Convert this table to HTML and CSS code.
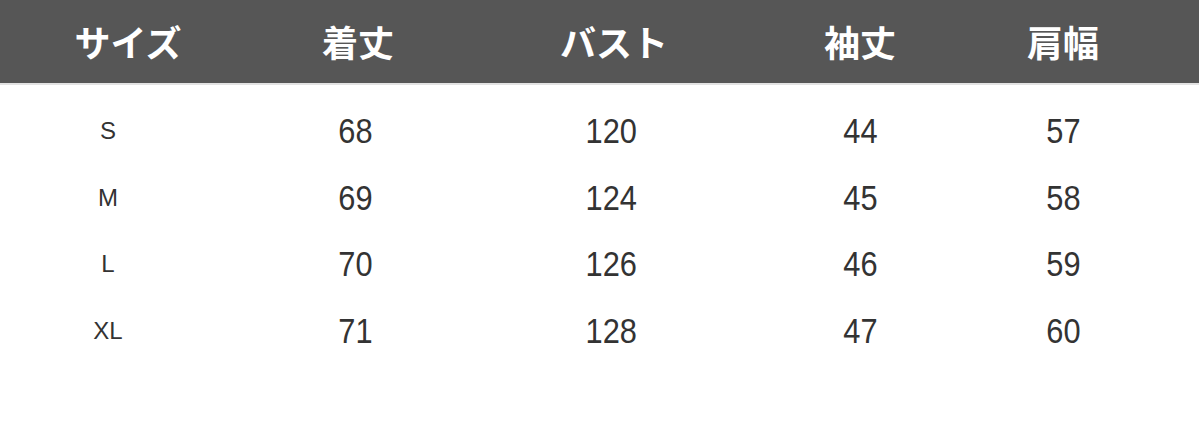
FILE: index.html
```html
<!DOCTYPE html>
<html lang="ja">
<head>
    <meta charset="UTF-8">
    <meta name="viewport" content="width=device-width, initial-scale=1.0">
    <link rel="stylesheet" href="styles.css">
    <title>サイズ表</title>
</head>
<body>
    <div class="size-table">
        <div class="table-head">
            <div class="cell">サイズ</div>
            <div class="cell">着丈</div>
            <div class="cell">バスト</div>
            <div class="cell">袖丈</div>
            <div class="cell">肩幅</div>
        </div>
        <div class="table-body">
            <div class="row">
                <div class="cell size">S</div>
                <div class="cell"><span class="num">68</span></div>
                <div class="cell"><span class="num">120</span></div>
                <div class="cell"><span class="num">44</span></div>
                <div class="cell"><span class="num">57</span></div>
            </div>
            <div class="row">
                <div class="cell size">M</div>
                <div class="cell"><span class="num">69</span></div>
                <div class="cell"><span class="num">124</span></div>
                <div class="cell"><span class="num">45</span></div>
                <div class="cell"><span class="num">58</span></div>
            </div>
            <div class="row">
                <div class="cell size">L</div>
                <div class="cell"><span class="num">70</span></div>
                <div class="cell"><span class="num">126</span></div>
                <div class="cell"><span class="num">46</span></div>
                <div class="cell"><span class="num">59</span></div>
            </div>
            <div class="row">
                <div class="cell size">XL</div>
                <div class="cell"><span class="num">71</span></div>
                <div class="cell"><span class="num">128</span></div>
                <div class="cell"><span class="num">47</span></div>
                <div class="cell"><span class="num">60</span></div>
            </div>
        </div>
    </div>
</body>
</html>
```

FILE: styles.css
```css
body {
    margin: 0;
    padding: 0;
    background-color: #ffffff;
    font-family: "Liberation Sans", "Noto Sans CJK JP", sans-serif;
}

.size-table {
    width: 1199px;
}

/* Shared column widths for head and rows */
.table-head,
.row {
    display: grid;
    grid-template-columns: 256px 204px 308px 184px 222px;
}

.cell {
    text-align: center;
}

/* Dark header bar */
.table-head {
    height: 83px;
    align-items: center;
    background-color: #565656;
    border-bottom: 2px solid #e2e2e2;
    color: #ffffff;
    font-family: "Noto Sans CJK JP", sans-serif;
    font-size: 36px;
    font-weight: bold;
}

.table-head .cell {
    padding-bottom: 2px;
}

.table-body {
    padding-top: 13px;
}

.row {
    height: 66.5px;
    align-items: center;
    color: #333333;
    font-size: 35px;
}

/* The numbers in the picture use a narrow face */
.num {
    display: inline-block;
    transform: scaleX(0.88);
}

.row .cell:nth-child(2),
.row .cell:nth-child(3) {
    padding-right: 6px;
}

/* Size letters are smaller and sit left of the header center */
.row .size {
    padding-right: 40px;
    font-size: 24px;
    color: #333333;
}
```
